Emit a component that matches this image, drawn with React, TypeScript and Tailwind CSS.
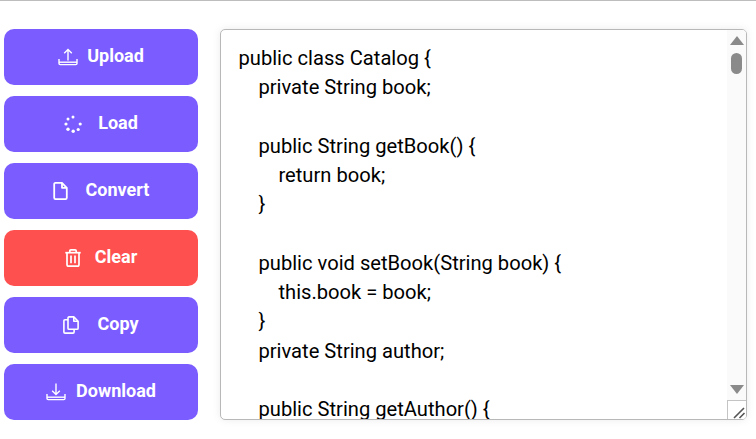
const code = [
  "public class Catalog {",
  "    private String book;",
  "",
  "    public String getBook() {",
  "        return book;",
  "    }",
  "",
  "    public void setBook(String book) {",
  "        this.book = book;",
  "    }",
  "    private String author;",
  "",
  "    public String getAuthor() {",
];

function UploadIcon() {
  return (
    <svg width="20" height="18" viewBox="0 0 20 18" fill="none" stroke="white" strokeWidth="1.4">
      <path d="M10 1.5V12.5M6.2 5.2L10 1.5L13.8 5.2" />
      <path d="M1 11V15.5C1 16.3 1.6 16.6 2.2 16.6H17.8C18.4 16.6 19 16.3 19 15.5V11" />
      <path d="M1 14.2H19" />
    </svg>
  );
}

function DownloadIcon() {
  return (
    <svg width="20" height="18" viewBox="0 0 20 18" fill="none" stroke="white" strokeWidth="1.4">
      <path d="M10 0.5V11.5M6.2 7.8L10 11.5L13.8 7.8" />
      <path d="M1 11V15.5C1 16.3 1.6 16.6 2.2 16.6H17.8C18.4 16.6 19 16.3 19 15.5V11" />
      <path d="M1 14.2H19" />
    </svg>
  );
}

function LoadIcon() {
  const dots = [
    [4, 3.9, 1.5],
    [9, 2, 1.5],
    [16.2, 9, 1.6],
    [14.2, 14.5, 1.6],
    [9.2, 16.2, 1.7],
    [4, 14.2, 1.7],
    [2, 9, 1.6],
  ];
  return (
    <svg width="18" height="18" viewBox="0 0 18 18" fill="white">
      {dots.map(([cx, cy, r], i) => (
        <circle key={i} cx={cx} cy={cy} r={r} />
      ))}
    </svg>
  );
}

function FileIcon() {
  return (
    <svg width="15" height="18" viewBox="0 0 15 18" fill="none" stroke="white" strokeWidth="1.8" strokeLinejoin="round">
      <path d="M1.2 2.2C1.2 1.4 1.7 0.9 2.5 0.9H9L13.8 5.8V15.8C13.8 16.6 13.3 17.1 12.5 17.1H2.5C1.7 17.1 1.2 16.6 1.2 15.8Z" />
      <path d="M9 0.9V5.8H13.8" />
    </svg>
  );
}

function TrashIcon() {
  return (
    <svg width="16" height="18" viewBox="0 0 16 18" fill="none" stroke="white" strokeWidth="1.7">
      <path d="M0.3 3.7H15.7" />
      <path d="M4.8 3.4V1.9C4.8 1.2 5.2 0.9 5.9 0.9H10.1C10.8 0.9 11.2 1.2 11.2 1.9V3.4" />
      <path d="M2 3.7V15.4C2 16.5 2.7 17.1 3.7 17.1H12.3C13.3 17.1 14 16.5 14 15.4V3.7" />
      <path d="M6 6.6V14.2M10 6.6V14.2" />
    </svg>
  );
}

function CopyIcon() {
  return (
    <svg width="16" height="18" viewBox="0 0 16 18" fill="none" stroke="white" strokeWidth="1.6" strokeLinejoin="round">
      <path d="M5 2C5 1.3 5.4 0.9 6 0.9H10.8L15.1 5.2V12.2C15.1 12.9 14.7 13.3 14 13.3H6C5.4 13.3 5 12.9 5 12.2Z" />
      <path d="M10.8 0.9V5.2H15.1" />
      <path d="M5 3.8H2C1.3 3.8 0.9 4.2 0.9 4.9V16C0.9 16.7 1.3 17.1 2 17.1H10C10.7 17.1 11.1 16.7 11.1 16V13.3" />
    </svg>
  );
}

function ActionButton({ label, bg, gap, icon }: { label: string; bg: string; gap: string; icon: React.ReactNode }) {
  return (
    <button className={`flex h-14 w-full items-center justify-center rounded-[10px] text-lg font-bold text-white ${bg} ${gap}`}>
      {icon}
      <span className="pb-0.5">{label}</span>
    </button>
  );
}

export default function App() {
  return (
    <div className="h-[439px] w-[756px] overflow-hidden border-t border-[#bdbdbd] bg-white font-['Roboto',sans-serif]">
      <div className="flex items-start gap-[22px] pt-7 pl-1 pr-[9px]">
        <div className="flex w-[194px] flex-col gap-[11px]">
          <ActionButton label="Upload" bg="bg-[#7a5cff]" gap="gap-[9px]" icon={<UploadIcon />} />
          <ActionButton label="Load" bg="bg-[#7a5cff]" gap="gap-4" icon={<LoadIcon />} />
          <ActionButton label="Convert" bg="bg-[#7a5cff]" gap="gap-[18px]" icon={<FileIcon />} />
          <ActionButton label="Clear" bg="bg-[#ff5050]" gap="gap-[14px]" icon={<TrashIcon />} />
          <ActionButton label="Copy" bg="bg-[#7a5cff]" gap="gap-[18px]" icon={<CopyIcon />} />
          <ActionButton label="Download" bg="bg-[#7a5cff]" gap="gap-[10px]" icon={<DownloadIcon />} />
        </div>
        <div className="relative flex h-[391px] flex-1 overflow-hidden rounded-[5px] border border-[#b8b8b8] bg-white shadow-[0_0_8px_rgba(0,0,0,0.08)]">
          <div className="flex-1 overflow-hidden pt-[14px] pl-[17.5px] text-[20.15px] leading-[29.25px] text-black">
            {code.map((text, i) => (
              <div key={i} className="h-[29.25px] whitespace-pre">
                {text}
              </div>
            ))}
          </div>
          <div className="flex w-[19px] flex-col items-center bg-[#fafafa] pt-[6px]">
            <div className="h-0 w-0 border-x-[7px] border-b-[9px] border-x-transparent border-b-[#8a8a8a]" />
            <div className="mt-[8px] h-[21px] w-[11px] rounded-[6px] bg-[#8a8a8a]" />
            <div className="mt-auto mb-[25px] h-0 w-0 border-x-[7px] border-t-[9px] border-x-transparent border-t-[#8a8a8a]" />
          </div>
          <div className="absolute right-0 bottom-0 flex h-[19px] w-[19px] items-end justify-end border-t border-l border-[#c4c4c4] bg-white">
            <svg width="14" height="14" viewBox="0 0 14 14" fill="none" stroke="#555555" strokeWidth="1.6">
              <path d="M2 13L12 3M7.5 13L12.5 8" />
            </svg>
          </div>
        </div>
      </div>
    </div>
  );
}
